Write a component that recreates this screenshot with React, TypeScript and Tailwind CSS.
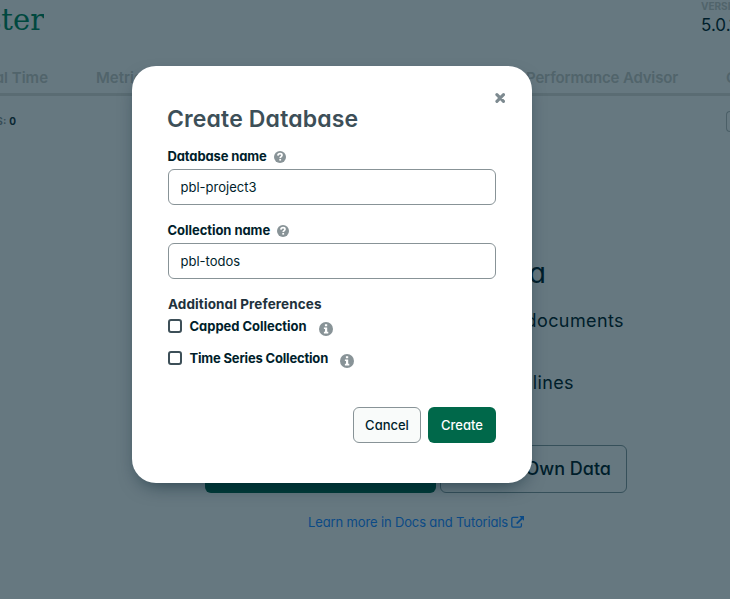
import React from "react";

const euclid = "font-['Inter','Liberation_Sans',sans-serif] [font-feature-settings:'cv11']";

function QuestionIcon() {
  return (
    <svg width="12" height="12" viewBox="0 0 12 12" className="mb-px shrink-0">
      <circle cx="6" cy="6" r="6" fill="#889397" />
      <path d="M3.9 4.6C4 3.2 5 2.7 6.1 2.7c1.1 0 1.9.6 1.9 1.6C8 5.6 6.2 5.6 6.2 7.1" fill="none" stroke="#fff" strokeWidth="1.7" />
      <rect x="5.3" y="7.9" width="1.8" height="1.7" fill="#fff" />
    </svg>
  );
}

function InfoIcon() {
  return (
    <svg width="14" height="14" viewBox="0 0 14 14" className="mt-[6px] shrink-0">
      <circle cx="7" cy="7" r="7" fill="#889397" />
      <path d="M5.9 2.2h2.3v2.1H5.9zM4.9 5.4h3.3v4.4h1.1v1.7H4.9V9.8H6V7.1H4.9z" fill="#fff" />
    </svg>
  );
}

function ExternalIcon() {
  return (
    <svg width="14" height="12" viewBox="0 0 14 12" className="ml-[3px] shrink-0">
      <path d="M7.3 1.4H2.1A1.3 1.3 0 0 0 .8 2.7v7.1a1.3 1.3 0 0 0 1.3 1.3h7a1.3 1.3 0 0 0 1.3-1.3V7.2" fill="none" stroke="#0b4a86" strokeWidth="1.3" />
      <path d="M8.3 0H13v4.7L11.4 3.2 6.3 8.2 5 6.9l5-5z" fill="#0b4a86" />
    </svg>
  );
}

function Field({ label, value, spacing }: { label: string; value: string; spacing: string }) {
  return (
    <div className="mb-4 flex flex-col">
      <label className="flex h-5 items-center gap-[7px] text-[13px] font-bold text-[#001e2b]">
        <span className={spacing}>{label}</span>
        <QuestionIcon />
      </label>
      <div className="mt-[2px] flex h-9 items-center rounded-[6px] border border-[#889397] bg-white px-[11.5px] pt-[2px] text-[13px] text-[#001e2b]">
        {value}
      </div>
    </div>
  );
}

function Check({ label, spacing }: { label: string; spacing: string }) {
  return (
    <div className="flex h-8 items-start">
      <span className="mt-[3px] h-[14px] w-[14px] rounded-[3px] border-2 border-[#3d4f58]" />
      <span className={`mr-3 ml-[7.5px] text-[13px] leading-5 font-bold text-[#001e2b] ${spacing}`}>{label}</span>
      <InfoIcon />
    </div>
  );
}

export default function App() {
  return (
    <div className={`relative h-[599px] w-[730px] overflow-hidden bg-[#667880] whitespace-nowrap ${euclid}`}>
      <header className="flex h-[60px] justify-between">
        <div className="flex w-11 justify-end overflow-hidden font-['DejaVu_Serif',serif] text-[29px] leading-[40px] text-[#00483f]">Cluster</div>
        <div className="w-[29px] overflow-hidden">
          <div className="h-3 text-[10px] leading-[12px] font-bold text-[#51646b]">VERSION</div>
          <div className="mt-[2px] text-[17px] leading-[22px] text-[#001e2b]">5.0.14</div>
        </div>
      </header>
      <nav className="flex h-9 border-b-[3px] border-[#5a6c73] text-[15px] leading-[35px] font-semibold text-[#51646b]">
        <div className="flex w-12 justify-end overflow-hidden">Real Time</div>
        <div className="ml-12">Metrics</div>
        <div className="ml-auto w-[152px] tracking-[-0.16px]">Performance Advisor</div>
        <div className="ml-12 w-1 overflow-hidden">Command Line Tools</div>
      </nav>
      <div className="flex h-[70px] items-start justify-between">
        <div className="mt-[16px] flex w-4 justify-end overflow-hidden text-[10px] leading-[18px] font-bold text-[#0b2733]"><span className="mr-[3px] text-[#394e58]">COLLECTIONS:</span>0</div>
        <div className="mt-[15px] h-[21px] w-1 rounded-l-[5px] border border-r-0 border-[#4b5f67]" />
      </div>
      <main className="flex flex-col text-[#001e2b]">
        <div className="mt-[89px] flex w-[546px] justify-end text-[28px] leading-9">Explore Your Data</div>
        <div className="mt-4 flex w-[624px] justify-end text-[18px] leading-7 tracking-[0.4px]">Find: run queries and interact with documents</div>
        <div className="mt-[34px] flex w-[574px] justify-end text-[18px] leading-7 tracking-[0.4px]">Aggregation: test aggregation pipelines</div>
        <div className="mt-12 ml-[205px] flex gap-1 text-[18px] font-medium">
          <div className="h-12 w-[231px] rounded-[6px] bg-[#003a38]" />
          <div className="flex h-12 w-[187px] items-center justify-end rounded-[6px] border border-[#36505a] pr-[15px] pb-px">Add My Own Data</div>
        </div>
        <a className="mt-[19px] ml-[308px] flex items-center text-[13px] leading-5 tracking-[-0.14px] text-[#0b4a86]">
          <span>Learn more in Docs and Tutorials</span>
          <ExternalIcon />
        </a>
      </main>
      <section className="absolute top-[66px] left-[132px] flex h-[417px] w-[400px] flex-col rounded-[24px] bg-white px-9 shadow-[0_8px_20px_-8px_rgba(0,30,43,0.7)]">
        <button className="mt-[27px] -mr-[9px] h-[10px] self-end">
          <svg width="10" height="10" viewBox="0 0 10 10"><path d="M1.9 1.7l6.6 6.6M8.5 1.7L1.9 8.3" stroke="#7d8a90" strokeWidth="3.1" strokeLinecap="round" /></svg>
        </button>
        <h1 className="mt-[1px] -ml-px text-[23px] leading-[30px] font-semibold tracking-[0.15px] text-[#3d4f58]">Create Database</h1>
        <div className="mt-[13px]">
          <Field label="Database name" value="pbl-project3" spacing="-ml-[0.5px] tracking-[-0.13px]" />
          <Field label="Collection name" value="pbl-todos" spacing="-ml-[0.5px] tracking-[-0.05px]" />
        </div>
        <div className="text-[13.5px] leading-[18px] font-bold tracking-[0.1px] text-[#21313c]">Additional Preferences</div>
        <div className="mt-[3px]">
          <Check label="Capped Collection" spacing="tracking-[-0.03px]" />
          <Check label="Time Series Collection" spacing="tracking-[-0.18px]" />
        </div>
        <div className="mt-auto mb-10 flex justify-end gap-[7px] text-[13px] font-medium">
          <button className="h-9 w-[68px] rounded-[6px] border border-[#889397] bg-[#f9fbfa] pt-[2px] text-[#001e2b]">Cancel</button>
          <button className="h-9 w-[68px] rounded-[6px] bg-[#00684a] pt-[2px] text-white">Create</button>
        </div>
      </section>
    </div>
  );
}
